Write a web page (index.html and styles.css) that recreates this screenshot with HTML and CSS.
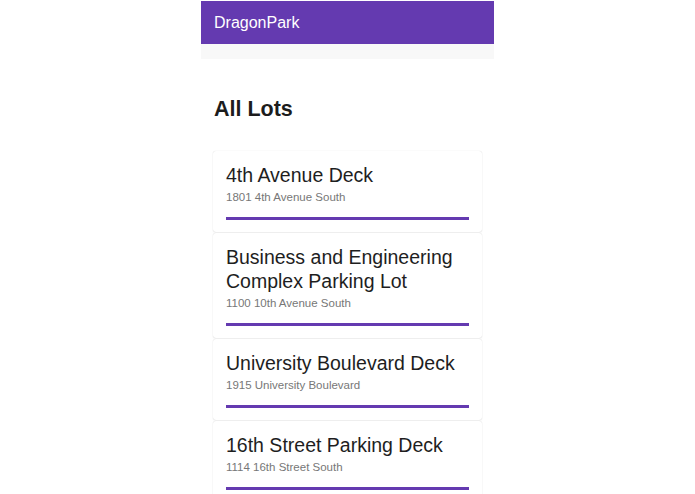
FILE: index.html
```html
<!DOCTYPE html>
<html lang="en">
<head>
    <meta charset="UTF-8">
    <meta name="viewport" content="width=device-width, initial-scale=1.0">
    <title>DragonPark</title>
    <link rel="stylesheet" href="styles.css">
</head>
<body>
    <div class="app">
        <header class="topbar">DragonPark</header>
        <div class="subbar"></div>

        <main class="content">
            <h1>All Lots</h1>

            <div class="lot">
                <h2>4th Avenue Deck</h2>
                <p class="address">1801 4th Avenue South</p>
                <div class="bar"></div>
            </div>

            <div class="lot">
                <h2>Business and Engineering Complex Parking Lot</h2>
                <p class="address">1100 10th Avenue South</p>
                <div class="bar"></div>
            </div>

            <div class="lot">
                <h2>University Boulevard Deck</h2>
                <p class="address">1915 University Boulevard</p>
                <div class="bar"></div>
            </div>

            <div class="lot">
                <h2>16th Street Parking Deck</h2>
                <p class="address">1114 16th Street South</p>
                <div class="bar"></div>
            </div>
        </main>
    </div>
</body>
</html>
```

FILE: styles.css
```css
body {
    font-family: "Liberation Sans", Arial, sans-serif;
    margin: 0;
    padding: 1px 0 0;
    background-color: #fff;
    color: #222;
}
.app {
    width: 293px;
    margin: 0 auto;
}
.topbar {
    height: 43px;
    line-height: 43px;
    padding: 0 13px;
    background-color: #643ab0;
    color: #fff;
    font-size: 16px;
}
.subbar {
    height: 15px;
    background-color: #f8f8f8;
}
.content {
    padding: 0 12px;
}
h1 {
    margin: 37px 0 0 1px;
    font-size: 21.5px;
    line-height: 26px;
    font-weight: bold;
    color: #1c1c1c;
}
.lot {
    padding: 12px 13px 12px;
    background-color: #fff;
    border-radius: 3px;
    box-shadow: 0 0 1px rgba(0, 0, 0, 0.18), 0 1px 2px rgba(0, 0, 0, 0.05);
    margin-bottom: 1px;
}
.lot:first-of-type {
    margin-top: 29px;
}
.lot h2 {
    margin: 0;
    font-size: 19.5px;
    line-height: 24px;
    font-weight: normal;
    color: #1e1e1e;
}
.address {
    margin: 3px 0 0;
    font-size: 11.5px;
    line-height: 14px;
    color: #777;
}
.bar {
    height: 3px;
    margin-top: 13px;
    background-color: #643ab0;
}
```
